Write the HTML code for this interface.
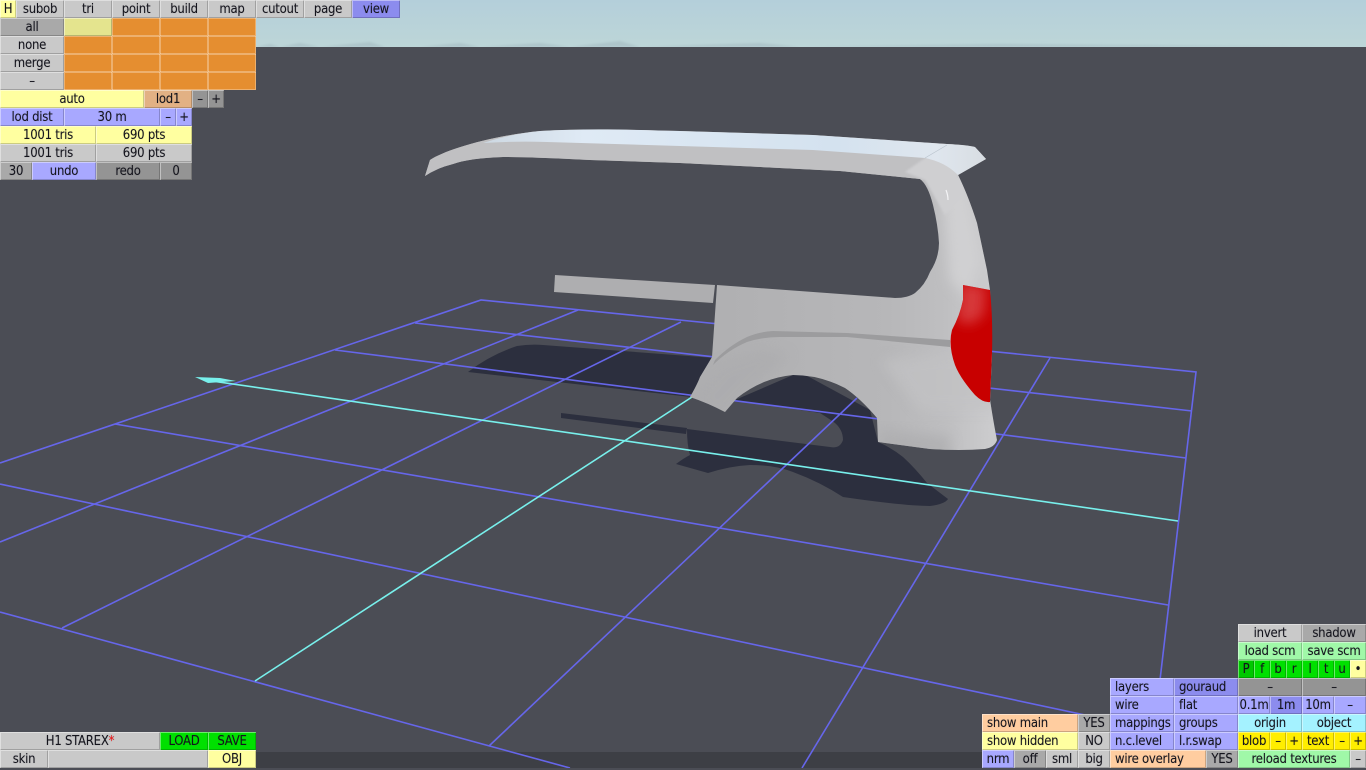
<!DOCTYPE html>
<html><head><meta charset="utf-8"><style>
html,body{margin:0;padding:0;width:1366px;height:768px;overflow:hidden;background:#4b4d55}
#s{position:absolute;left:0;top:0}
i{position:absolute;display:block;font-style:normal;height:18px;line-height:20px;text-align:center;font-family:"DejaVu Sans Condensed","DejaVu Sans",sans-serif;font-stretch:condensed;font-size:13px;letter-spacing:-.25px;color:#14141c;white-space:pre;box-sizing:border-box;box-shadow:inset 1px 1px 0 rgba(255,255,255,.42),inset -1px -1px 0 rgba(0,0,0,.2);background:#c9c9c9;text-shadow:0 0 1px rgba(20,20,40,.25)}
.l{text-align:left;padding-left:5px}
.d{background:#a9a9a9}.k{background:#949494}.y{background:#ffffa0}.b{background:#a8a8ff}.v{background:#8c8cee}
.o{background:#e58e30;box-shadow:inset 1px 1px 0 rgba(255,255,255,.3),inset -1px -1px 0 rgba(255,255,255,.3)}
.p{background:#ffcda0}.t{background:#e2b184}.g{background:#a0f8a8}.G{background:#00e000}.c{background:#a4f2ff}.Y{background:#ffee00}.h{background:#e4e48e}
</style></head><body>
<svg id="s" width="1366" height="768" viewBox="0 0 1366 768">
<defs>
<linearGradient id="sky" x1="0" y1="0" x2="0" y2="1"><stop offset="0" stop-color="#b4cfda"/><stop offset="1" stop-color="#bdd6d8"/></linearGradient>
<linearGradient id="roof" gradientUnits="userSpaceOnUse" x1="483" y1="0" x2="986" y2="0"><stop offset="0" stop-color="#cdd8e2"/><stop offset=".2" stop-color="#dfeaf5"/><stop offset=".7" stop-color="#d4e2ef"/><stop offset=".9" stop-color="#dfe6ee"/><stop offset="1" stop-color="#d8dde2"/></linearGradient>
<linearGradient id="body" gradientUnits="userSpaceOnUse" x1="700" y1="0" x2="990" y2="0"><stop offset="0" stop-color="#afafb1"/><stop offset=".65" stop-color="#b7b7b9"/><stop offset=".85" stop-color="#bfbfc1"/><stop offset="1" stop-color="#cbcbcd"/></linearGradient>
<filter id="bl" x="-30%" y="-30%" width="160%" height="160%"><feGaussianBlur stdDeviation="6"/></filter>
<filter id="bs" x="-10%" y="-100%" width="120%" height="300%"><feGaussianBlur stdDeviation="1"/></filter>
<clipPath id="vc"><path d="M425 176L430 160C445 150 490 136 540 131C590 128 640 130 680 131L813 135L947 144Q968 145 975 147L986 159L958 175Q968 195 977 223L987 270L990 290L992 353L990 400Q994 425 997 440Q995 447 985 449Q960 451 930 449L878 442L877 418Q860 398 845 388Q820 375 793 375Q762 378 737 398L725 412Q708 403 690 397Q697 385 700 377L712 357L717 285L895 298Q908 298 915 293Q925 285 930 272Q939 258 939 243Q938 225 933 205Q928 185 920 179L840 171L680 163L590 160Q530 157 503 157Q470 158 453 164Q437 168 425 176Z"/></clipPath>
<clipPath id="rc"><path d="M963 285L990 290Q993 320 992 353L990 402Q983 403 975 395Q960 378 955 365Q948 345 952 330Q960 315 963 300Z"/></clipPath>
</defs>
<rect width="1366" height="48" fill="url(#sky)"/>
<path d="M256 47L270 44 280 47 300 43 320 47 370 42 385 47 420 47 460 43 480 47 540 43 570 47 620 41 640 47 760 43 800 47 1000 44 1366 47Z" fill="#adc5ca" filter="url(#bs)"/>
<rect y="47" width="1366" height="705" fill="#4b4d55"/>
<rect y="752" width="1366" height="16" fill="#3d3f45"/>
<path d="M468 372Q490 355 517 346Q530 344 543 345L715 358L700 398Z" fill="#2c2f3e"/>
<path d="M561 413L687 428 686 434 561 418Z" fill="#2c2f3e"/>
<path d="M735 400L800 372 870 410 878 442Q892 448 903 457Q915 468 927 483L948 499Q945 504 930 506Q905 506 843 497Q820 482 793 472Q775 465 750 465Q730 466 708 473L676 464Q684 458 690 455Q687 445 687 429L830 447Q840 449 843 440Q843 430 835 423Q828 418 820 413Z" fill="#2c2f3e"/>
<g fill="none" stroke="#6666ea" stroke-width="1.6">
<path d="M0 463L481 300 1196 372 1160 680"/>
<path d="M415 323L1192 411"/>
<path d="M335 350L1186 458"/>
<path d="M115 424L1168 605"/>
<path d="M0 484L1165 732"/>
<path d="M0 612L570 768"/>
<path d="M578 310L0 542"/>
<path d="M681 322L62 628"/>
<path d="M857 398L489 746"/>
<path d="M1050 358L802 768"/>
</g>
<g fill="none" stroke="#78f0ec" stroke-width="1.6">
<path d="M692 397L255 681"/>
<path d="M205 380L1178 521"/>
</g>
<path d="M195 377L220 378 236 381 208 383Z" fill="#78f0ec"/>
<path d="M555 275L715 285 713 303 554 292Z" fill="#aeaeb0"/>
<g clip-path="url(#vc)">
<rect x="420" y="120" width="590" height="340" fill="url(#body)"/>
<path d="M940 165L965 165 982 260 970 300 950 280Z" fill="#d0d0d2" filter="url(#bl)"/>
<path d="M880 360L1000 350 1000 410 920 410Z" fill="#c2c2c4" filter="url(#bl)" opacity=".7"/>
<path d="M880 430L950 436 950 460 880 460Z" fill="#acacae" filter="url(#bl)" opacity=".7"/>
<path d="M690 400L720 365 760 350 790 355 760 380 720 420Z" fill="#acacae" filter="url(#bl)" opacity=".7"/>
<path d="M420 130L960 130 958 178 920 180 680 164 500 158 440 168 420 180Z" fill="#c0c0c2"/>
<path d="M925 158L990 145 990 160 958 176 965 195 945 215 925 180 905 172Z" fill="#cfcfd1" filter="url(#bs)"/>
<path d="M483 143Q515 141 547 142L680 146L813 150L925 158Q945 162 958 175L986 159L975 147Q968 145 947 144L813 135L680 131C640 130 590 128 540 131Q510 134 483 143Z" fill="url(#roof)"/>
<path d="M925 158L947 145" stroke="#b8c2cc" stroke-width=".6" fill="none"/>
<path d="M946 190Q948 195 948 200" stroke="#f4f4f6" stroke-width="1.2" fill="none"/>
<path d="M713 365Q728 350 747 342Q762 337 780 337L847 337L950 347L950 340L847 333L773 331Q758 332 747 337Q730 345 715 360Z" fill="#9c9c9e"/>
</g>
<g clip-path="url(#rc)">
<rect x="945" y="280" width="50" height="125" fill="#c80000"/>
<path d="M960 282L986 286 984 315 970 325 956 320Z" fill="#d83c40" filter="url(#bl)" opacity=".9"/>
</g>
</svg>

<i class="y" style="left:0;top:0;width:16px">H</i>
<i style="left:16px;top:0;width:48px">subob</i>
<i style="left:64px;top:0;width:48px">tri</i>
<i style="left:112px;top:0;width:48px">point</i>
<i style="left:160px;top:0;width:48px">build</i>
<i style="left:208px;top:0;width:48px">map</i>
<i style="left:256px;top:0;width:48px">cutout</i>
<i style="left:304px;top:0;width:48px">page</i>
<i class="v" style="left:352px;top:0;width:48px">view</i>

<i class="d" style="left:0;top:18px;width:64px">all</i>
<i style="left:0;top:36px;width:64px">none</i>
<i style="left:0;top:54px;width:64px">merge</i>
<i style="left:0;top:72px;width:64px">–</i>

<i class="h" style="left:64px;top:18px;width:48px"></i><i class="o" style="left:112px;top:18px;width:48px"></i><i class="o" style="left:160px;top:18px;width:48px"></i><i class="o" style="left:208px;top:18px;width:48px"></i>
<i class="o" style="left:64px;top:36px;width:48px"></i><i class="o" style="left:112px;top:36px;width:48px"></i><i class="o" style="left:160px;top:36px;width:48px"></i><i class="o" style="left:208px;top:36px;width:48px"></i>
<i class="o" style="left:64px;top:54px;width:48px"></i><i class="o" style="left:112px;top:54px;width:48px"></i><i class="o" style="left:160px;top:54px;width:48px"></i><i class="o" style="left:208px;top:54px;width:48px"></i>
<i class="o" style="left:64px;top:72px;width:48px"></i><i class="o" style="left:112px;top:72px;width:48px"></i><i class="o" style="left:160px;top:72px;width:48px"></i><i class="o" style="left:208px;top:72px;width:48px"></i>

<i class="y" style="left:0;top:90px;width:144px">auto</i>
<i class="t" style="left:144px;top:90px;width:48px">lod1</i>
<i class="k" style="left:192px;top:90px;width:16px">–</i>
<i class="k" style="left:208px;top:90px;width:16px">+</i>
<i class="b" style="left:0;top:108px;width:64px">lod dist</i>
<i class="b" style="left:64px;top:108px;width:96px">30 m</i>
<i class="b" style="left:160px;top:108px;width:16px">–</i>
<i class="b" style="left:176px;top:108px;width:16px">+</i>
<i class="y" style="left:0;top:126px;width:96px">1001 tris</i>
<i class="y" style="left:96px;top:126px;width:96px">690 pts</i>
<i style="left:0;top:144px;width:96px">1001 tris</i>
<i style="left:96px;top:144px;width:96px">690 pts</i>
<i class="d" style="left:0;top:162px;width:32px">30</i>
<i class="b" style="left:32px;top:162px;width:64px">undo</i>
<i class="k" style="left:96px;top:162px;width:64px">redo</i>
<i class="k" style="left:160px;top:162px;width:32px">0</i>

<i style="left:0;top:732px;width:160px">H1 STAREX<span style="color:#f01010">*</span></i>
<i class="G" style="left:160px;top:732px;width:48px">LOAD</i>
<i class="G" style="left:208px;top:732px;width:48px">SAVE</i>
<i style="left:0;top:750px;width:48px">skin</i>
<i style="left:48px;top:750px;width:160px"></i>
<i class="y" style="left:208px;top:750px;width:48px">OBJ</i>

<i style="left:1238px;top:624px;width:64px">invert</i>
<i class="d" style="left:1302px;top:624px;width:64px">shadow</i>
<i class="g" style="left:1238px;top:642px;width:64px">load scm</i>
<i class="g" style="left:1302px;top:642px;width:64px">save scm</i>
<i class="G" style="left:1238px;top:660px;width:16px;background:#00c800">P</i>
<i class="G" style="left:1254px;top:660px;width:16px">f</i>
<i class="G" style="left:1270px;top:660px;width:16px">b</i>
<i class="G" style="left:1286px;top:660px;width:16px">r</i>
<i class="G" style="left:1302px;top:660px;width:16px">l</i>
<i class="G" style="left:1318px;top:660px;width:16px">t</i>
<i class="G" style="left:1334px;top:660px;width:16px">u</i>
<i class="y" style="left:1350px;top:660px;width:16px">•</i>
<i class="k" style="left:1238px;top:678px;width:64px">–</i>
<i class="k" style="left:1302px;top:678px;width:64px">–</i>
<i class="b" style="left:1238px;top:696px;width:32px">0.1m</i>
<i class="v" style="left:1270px;top:696px;width:32px">1m</i>
<i class="b" style="left:1302px;top:696px;width:32px">10m</i>
<i class="b" style="left:1334px;top:696px;width:32px">–</i>
<i class="c" style="left:1238px;top:714px;width:64px">origin</i>
<i class="c" style="left:1302px;top:714px;width:64px">object</i>
<i class="Y" style="left:1238px;top:732px;width:32px">blob</i>
<i class="Y" style="left:1270px;top:732px;width:16px">–</i>
<i class="Y" style="left:1286px;top:732px;width:16px">+</i>
<i class="Y" style="left:1302px;top:732px;width:32px">text</i>
<i class="Y" style="left:1334px;top:732px;width:16px">–</i>
<i class="Y" style="left:1350px;top:732px;width:16px">+</i>
<i class="g" style="left:1238px;top:750px;width:112px">reload textures</i>
<i style="left:1350px;top:750px;width:16px">–</i>

<i class="b l" style="left:1110px;top:678px;width:64px">layers</i>
<i class="v l" style="left:1174px;top:678px;width:64px">gouraud</i>
<i class="b l" style="left:1110px;top:696px;width:64px">wire</i>
<i class="b l" style="left:1174px;top:696px;width:64px">flat</i>
<i class="b l" style="left:1110px;top:714px;width:64px">mappings</i>
<i class="b l" style="left:1174px;top:714px;width:64px">groups</i>
<i class="b l" style="left:1110px;top:732px;width:64px">n.c.level</i>
<i class="b l" style="left:1174px;top:732px;width:64px">l.r.swap</i>
<i class="p l" style="left:1110px;top:750px;width:96px">wire overlay</i>
<i class="d" style="left:1206px;top:750px;width:32px">YES</i>

<i class="p l" style="left:982px;top:714px;width:96px">show main</i>
<i class="d" style="left:1078px;top:714px;width:32px">YES</i>
<i class="y l" style="left:982px;top:732px;width:96px">show hidden</i>
<i style="left:1078px;top:732px;width:32px">NO</i>
<i class="b" style="left:982px;top:750px;width:32px">nrm</i>
<i class="d" style="left:1014px;top:750px;width:32px">off</i>
<i style="left:1046px;top:750px;width:32px">sml</i>
<i style="left:1078px;top:750px;width:32px">big</i>
</body></html>
